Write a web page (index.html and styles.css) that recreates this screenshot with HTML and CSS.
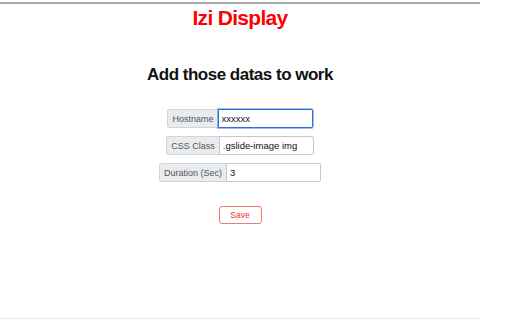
FILE: index.html
```html
<!DOCTYPE html>
<html lang="en">
<head>
    <meta charset="UTF-8">
    <meta name="viewport" content="width=device-width, initial-scale=1.0">
    <title>Izi Display</title>
    <link rel="stylesheet" href="styles.css">
</head>
<body>
    <div class="popup">
        <h1 class="title">Izi Display</h1>
        <h2 class="subtitle">Add those datas to work</h2>

        <form class="settings">
            <div class="field">
                <span class="field-label">Hostname</span>
                <input type="text" class="field-input focused" value="xxxxxx">
            </div>
            <div class="field">
                <span class="field-label">CSS Class</span>
                <input type="text" class="field-input" value=".gslide-image img">
            </div>
            <div class="field">
                <span class="field-label">Duration (Sec)</span>
                <input type="text" class="field-input" value="3">
            </div>
            <button type="button" class="save">Save</button>
        </form>
    </div>
</body>
</html>
```

FILE: styles.css
```css
body {
    margin: 0;
    background: #fff;
    font-family: "Liberation Sans", Arial, sans-serif;
}
.popup {
    width: 480px;
    height: 314px;
    margin-top: 2px;
    border-top: 2px solid #a9a9a9;
    border-bottom: 1px solid #e8e8e8;
    text-align: center;
}
.title {
    margin: 2px 0 0;
    font-size: 21px;
    line-height: 24px;
    letter-spacing: -0.7px;
    color: #ff0000;
}
.subtitle {
    margin: 35px 0 0;
    font-size: 17px;
    line-height: 20px;
    letter-spacing: -0.5px;
    color: #111;
}
.settings {
    margin-top: 24px;
    display: flex;
    flex-direction: column;
    align-items: center;
    gap: 8px;
}
.field {
    display: flex;
    height: 19px;
}
.field-label {
    display: flex;
    align-items: center;
    padding: 0 4px;
    font-size: 9px;
    color: #555;
    background: #e9ecef;
    border: 1px solid #ced4da;
    border-right: none;
    border-radius: 3px 0 0 3px;
}
.field-input {
    box-sizing: border-box;
    width: 95px;
    height: 19px;
    margin: 0;
    padding: 0 3px;
    font-family: inherit;
    font-size: 9.5px;
    color: #111;
    border: 1px solid #c8c8c8;
    border-radius: 0 2px 2px 0;
    outline: none;
}
.field-input.focused {
    border-color: #2c6fd8;
    box-shadow: 0 0 0 1px rgba(44, 111, 216, 0.45);
}
.save {
    margin-top: 16px;
    width: 43px;
    height: 18px;
    padding: 0;
    font-family: inherit;
    font-size: 8.5px;
    color: #f03030;
    background: #fff;
    border: 1px solid #f47a7a;
    border-radius: 3px;
    cursor: pointer;
}
```
